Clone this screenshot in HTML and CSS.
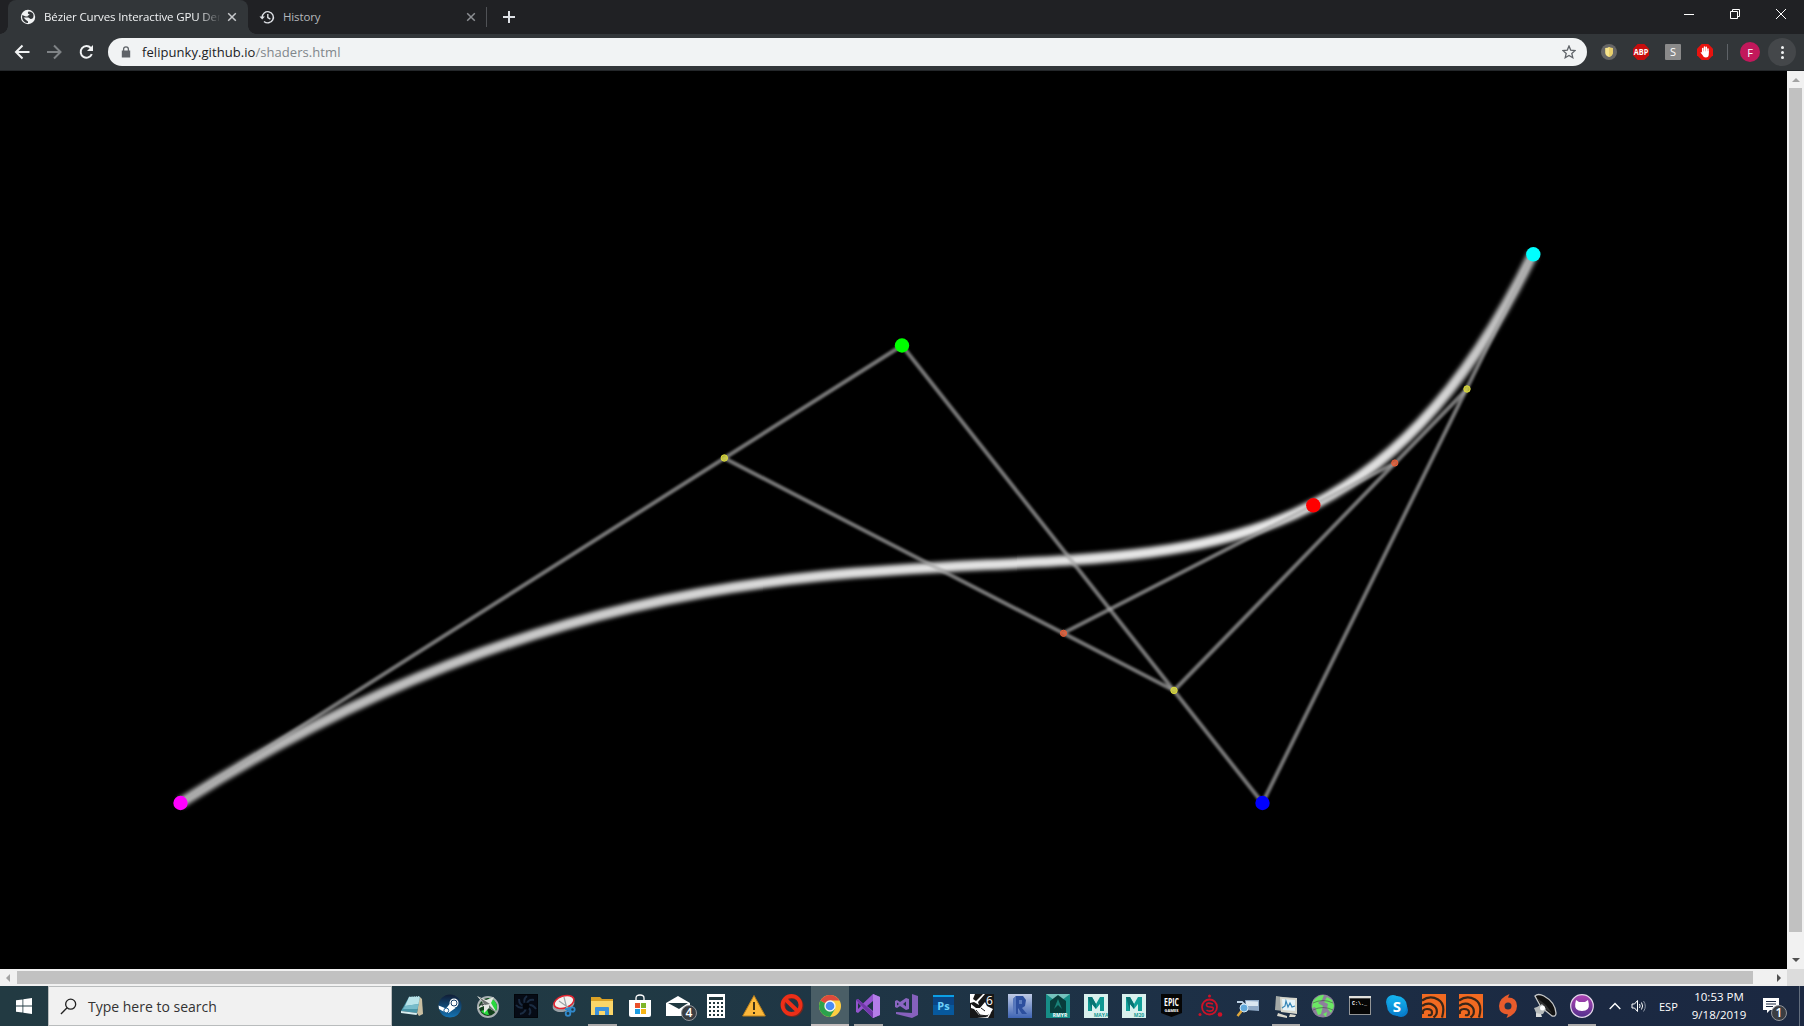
FILE: index.html
```html
<!DOCTYPE html>
<html lang="en">
<head>
<meta charset="utf-8">
<title>Bézier Curves Interactive GPU Demo</title>
<link rel="stylesheet" href="styles.css">
</head>
<body>
<div class="screen">
  <header class="tabstrip">
    <div class="tab tab-active">
      <svg class="tab-icon" viewBox="0 0 16 16"><circle cx="8" cy="8" r="7.2" fill="#f1f3f4"/><path d="M8.500 2.500q-1 1-.5 2.200 1.500 0 1.500 1.300-2 .3-2 1.500-2 0-3-.5L2.300 6Q1.500 10 4 12.500q2 1.800 4 1.500v-1.500l-2-1.500-2.500-2.500h5l2 1.500q2 0 2.800-1.500 1-4-1.800-5.300Q10 2.200 8.500 2.500z" fill="#323639"/></svg>
      <span class="tab-title fade">Bézier Curves Interactive GPU Demo</span>
      <svg class="tab-close bright" viewBox="0 0 10 10"><path d="M1.200 1.200l7.600 7.600M8.800 1.200L1.200 8.800"/></svg>
    </div>
    <div class="tab">
      <svg class="tab-icon history" viewBox="0 0 16 16" fill="none" stroke="#dee1e6" stroke-width="1.4"><path d="M3.200 8.500a5.600 5.600 0 1 1 1.800 3.900M8.800 5v3.600l2.600 1.500"/><path d="M.5 7.600h5.400L3.200 10.500z" fill="#dee1e6" stroke="none"/></svg>
      <span class="tab-title">History</span>
      <svg class="tab-close" viewBox="0 0 10 10"><path d="M1.200 1.200l7.600 7.600M8.800 1.200L1.200 8.800"/></svg>
    </div>
    <div class="tab-divider"></div>
    <svg class="new-tab" viewBox="0 0 12 12"><path d="M6 0v12M0 6h12" stroke="#dee1e6" stroke-width="2"/></svg>
    <div class="window-controls">
      <svg viewBox="0 0 12 12"><path d="M1 6.500h10"/></svg>
      <svg viewBox="0 0 12 12"><path d="M1.500 3.500h7v7h-7zM3.500 3.500v-2h7v7h-2"/></svg>
      <svg viewBox="0 0 12 12"><path d="M1 1l10 10M11 1L1 11"/></svg>
    </div>
  </header>

  <nav class="toolbar">
    <svg class="nav-icon" viewBox="0 0 16 16" stroke="#f1f3f4"><path d="M15.500 8H2.500M8.500 1.500L2 8l6.500 6.500"/></svg>
    <svg class="nav-icon" viewBox="0 0 16 16" stroke="#7f8386"><path d="M1 8h13M8 1.500L14.500 8 8 14.500"/></svg>
    <svg class="nav-icon" viewBox="0 0 16 16" stroke="#f1f3f4"><path d="M13.800 10.200A5.800 5.800 0 1 1 12.800 4"/><path d="M15 1v6H9z" fill="#f1f3f4" stroke="none"/></svg>
    <div class="omnibox">
      <svg class="lock" viewBox="0 0 10 12"><path d="M.8 4.500h8.400v7H.8z" fill="#5f6368"/><path d="M2.600 5V3.200a2.400 2.400 0 0 1 4.800 0V5" fill="none" stroke="#5f6368" stroke-width="1.300"/></svg>
      <span class="url">felipunky.github.io<span class="path">/shaders.html</span></span>
      <svg class="star" viewBox="0 0 14 14"><path d="M7 1l1.700 4.100 4.400.4-3.300 2.900 1 4.300L7 10.400l-3.800 2.300 1-4.300L.9 5.500l4.400-.4z" fill="none" stroke="#5f6368" stroke-width="1.300"/></svg>
    </div>
    <div class="extensions">
      <svg viewBox="0 0 16 16"><circle cx="8" cy="8" r="8" fill="#666"/><path d="M4.200 4q2.800 0 3.800-1 1 1 3.800 1v4.500q0 3-3.800 4.500-3.800-1.500-3.800-4.500z" fill="#f7e48b"/><path d="M8 3q1 1 3.800 1v4.500q0 3-3.800 4.500z" fill="#ead06a"/></svg>
      <svg viewBox="0 0 16 16"><path d="M4.700 0h6.600L16 4.700v6.600L11.300 16H4.700L0 11.300V4.700z" fill="#c70d0d"/><text class="abp" x="8" y="11" text-anchor="middle" textLength="14.500" lengthAdjust="spacingAndGlyphs">ABP</text></svg>
      <svg viewBox="0 0 16 16"><rect width="16" height="16" rx="1" fill="#8a8a8a"/><text class="ext-s" x="8" y="12" text-anchor="middle">S</text></svg>
      <svg viewBox="0 0 16 16"><path d="M4.700 0h6.600L16 4.700v6.600L11.300 16H4.700L0 11.300V4.700z" fill="#e8130f"/><path d="M5.700 8V4.500M7.500 7.500V3M9.300 7.500V3.300M11 8V5" stroke="#fff" stroke-width="1.500" stroke-linecap="round"/><path d="M5 7.300h6.800V10q0 3.500-3 3.500-2.300 0-3.300-2.500L3.500 8.500l.8-.6L5.300 9z" fill="#fff"/></svg>
    </div>
    <div class="toolbar-divider"></div>
    <div class="avatar">F</div>
    <div class="menu"><i></i><i></i><i></i></div>
  </nav>

  <main class="page">
    <svg class="canvas" viewBox="0 71 1787 898">
      <defs>
        <filter id="soft" filterUnits="userSpaceOnUse" x="0" y="71" width="1787" height="898"><feGaussianBlur stdDeviation="1.9"/></filter>
        <filter id="thin" filterUnits="userSpaceOnUse" x="0" y="71" width="1787" height="898"><feGaussianBlur stdDeviation=".9"/></filter>
        <linearGradient id="tone" gradientUnits="userSpaceOnUse" x1="180" y1="0" x2="1533" y2="0"><stop offset="0" stop-color="#b0b0b0"/><stop offset=".5" stop-color="#e0e0e0"/><stop offset=".82" stop-color="#e8e8e8"/><stop offset=".92" stop-color="#dcdcdc"/><stop offset="1" stop-color="#b4b4b4"/></linearGradient>
      </defs>
      <path d="M180.500 803C902 345.500 1262.500 803 1533 254" fill="none" stroke="url(#tone)" stroke-width="10.500" filter="url(#soft)"/>
      <g class="hull" filter="url(#thin)">
        <path d="M180.500 803L902 345.500"/><path d="M902 345.500L1262.500 803"/><path d="M1262.500 803L1533 254"/>
        <path d="M724 458L1174 690.500"/><path d="M1174 690.500L1467 389"/><path d="M1063.500 633L1395 463"/>
      </g>
      <circle cx="180.500" cy="803" r="7.200" fill="#f0f"/><circle cx="902" cy="345.500" r="7.200" fill="#0f0"/>
      <circle cx="1262.500" cy="803" r="7.200" fill="#00f"/><circle cx="1533.300" cy="254.300" r="7.200" fill="#0ff"/>
      <circle cx="1313.300" cy="505.300" r="7.200" fill="red"/>
      <g fill="#dcdc3a" stroke="#dcdc3a" fill-opacity=".75"><circle cx="724.300" cy="458" r="3.200"/><circle cx="1174" cy="690.400" r="3.200"/><circle cx="1467" cy="389" r="3.200"/></g>
      <g fill="#ea5c34" stroke="#ea5c34" fill-opacity=".75"><circle cx="1063.500" cy="633.300" r="3.100"/><circle cx="1394.800" cy="463" r="3.100"/></g>
    </svg>
    <div class="vscroll"><b class="arrow up"></b><div class="vthumb"></div><b class="arrow down"></b></div>
    <div class="hscroll"><b class="arrow left"></b><div class="hthumb"></div><b class="arrow right"></b></div>
    <div class="corner"></div>
  </main>

  <footer class="taskbar">
    <div class="start"><svg viewBox="0 0 16 16"><path d="M0 2.300l6.500-.9v6.200H0zM7.300 1.200L16 0v7.600H7.300zM0 8.400h6.500v6.200L0 13.700zM7.300 8.400H16V16l-8.700-1.200z" fill="#fff"/></svg></div>
    <div class="search"><svg viewBox="0 0 18 18"><circle cx="11.300" cy="6.500" r="5.300" fill="none" stroke="#222" stroke-width="1.400"/><path d="M7.500 10.300L1 17" stroke="#222" stroke-width="1.400"/></svg><span>Type here to search</span></div>
    <div class="apps">
      <div class="app"><svg viewBox="0 0 24 24"><path d="M19 2l3 3 1 15-4 2-2-3z" fill="#c9bfa2"/><path d="M9 3l11-1-3 17-16-2z" fill="#4a97a9"/><path d="M9 3l11-1-1.500 8L5 12z" fill="#b9e4ea"/><path d="M5 12l13.500-2-1 5L3 15z" fill="#77bccb"/><path d="M1 17l16 2-.4 2L1 19z" fill="#d9eef0"/><path d="M9 2.500h11" stroke="#506e76" stroke-dasharray="1 1"/></svg></div>
      <div class="app"><svg viewBox="0 0 24 24"><defs><linearGradient id="st" x2="0" y2="1"><stop stop-color="#101d35"/><stop offset="1" stop-color="#1473b3"/></linearGradient></defs><circle cx="12" cy="12" r="11.500" fill="url(#st)"/><path d="M.6 11.500L8 14.500l4.500-5.500 5 5-7 5-6-2L1 15z" fill="#fff"/><circle cx="16" cy="9" r="4.500" fill="#fff"/><circle cx="16" cy="9" r="3" fill="#fff" stroke="#173d66"/><circle cx="8.300" cy="16.500" r="2.400" fill="#fff" stroke="#1b5d94"/></svg></div>
      <div class="app"><svg viewBox="0 0 24 24"><circle cx="12" cy="13" r="10" fill="#12401c" stroke="#a9b0b2" stroke-width="2"/><path d="M13 4a9 9 0 0 1 7 13l-5-5zM5 17l6-2 2 6q-5 0-8-4z" fill="#29d83e"/><path d="M1 2l9 4 8-3-3 6 6 10-8-5-5 5v-7l-7 3 6-6z" fill="#e6e8e4"/><path d="M3 3l11 7-5 1z" fill="#6e7271"/><path d="M13 11l8 8-8-5z" fill="#65706a"/><path d="M4 9l5 1-3 2z" fill="#454b48"/></svg></div>
      <div class="app"><svg viewBox="0 0 24 24"><rect width="24" height="24" fill="#060b15"/><g fill="none" stroke="#1b2c42" stroke-width="2"><path d="M12 12Q5 12 5 5M12 12Q8 6 13 2M12 12q1-7 8-6M12 12q6-3 10 3M12 12q7 4 3 9M12 12q0 7-6 8M12 12Q6 16 2 11"/></g><circle cx="12" cy="12" r="3.500" fill="#03060c"/><rect x=".5" y=".5" width="23" height="23" fill="none" stroke="#03060b"/></svg></div>
      <div class="app"><svg viewBox="0 0 24 24"><ellipse cx="11.500" cy="10.500" rx="11.300" ry="7" transform="rotate(-18 11.500 10.500)" fill="#9aa1a6"/><ellipse cx="12" cy="8" rx="10.300" ry="6" transform="rotate(-18 12 8)" fill="#f4f1ef" stroke="#df2531" stroke-width="1.600"/><path d="M7 7l10 7M12 3l3 12" stroke="#9ba3a8" stroke-width="1.200"/><g fill="none" stroke="#3189cb" stroke-width="1.800"><circle cx="20.500" cy="15.500" r="2.200"/><circle cx="16" cy="19.500" r="2.300"/><path d="M13 15l6 0M17 17v-4"/></g></svg></div>
      <div class="app running"><svg viewBox="0 0 24 24"><path d="M1 3h9l2 2h11v15H1z" fill="#dba226"/><path d="M1 7h22v14H1z" fill="#fbd669"/><path d="M5 21v-7q0-1 1-1h12q1 0 1 1v7h-4v-4H9v4z" fill="#3d91da"/></svg></div>
      <div class="app"><svg viewBox="0 0 24 24"><path d="M8 7V4q0-3 4-3t4 3v3" fill="none" stroke="#fff" stroke-width="1.300"/><path d="M1 6h22v15q0 2-2 2H3q-2 0-2-2z" fill="#fff"/><path fill="#e9502b" d="M7 9h5v5H7z"/><path fill="#7eb62a" d="M13 9h5v5h-5z"/><path fill="#1b9de3" d="M7 15h5v5H7z"/><path fill="#f8b514" d="M13 15h5v5h-5z"/></svg></div>
      <div class="app"><svg viewBox="0 0 24 24"><path d="M0 9l12-7 12 7v13H0z" fill="#fff"/><path d="M2 9h20l-9 6z" fill="#203840"/></svg><span class="badge">4</span></div>
      <div class="app"><svg viewBox="0 0 24 24"><path d="M3 0h18v24H3z" fill="#fff"/><path d="M5 3h14v3H5z" fill="#23383e"/><path d="M5 9h14M5 13h14M5 17h14M5 21h14" stroke="#23383e" stroke-width="2" stroke-dasharray="2 2"/></svg></div>
      <div class="app"><svg viewBox="0 0 24 24"><path d="M12 1.500L23.300 22H.7z" fill="#fcb83b" stroke="#bd821c" stroke-linejoin="round"/><path d="M12 8v8M12 18v2" stroke="#201c12" stroke-width="1.700"/></svg></div>
      <div class="app"><svg viewBox="0 0 24 24"><circle cx="12.500" cy="12" r="9" fill="none" stroke="#78271e" stroke-width="4"/><circle cx="11.500" cy="11" r="9" fill="none" stroke="#ed2f18" stroke-width="3.800"/><path d="M5 5l13 12.500" stroke="#ed2f18" stroke-width="4"/></svg></div>
      <div class="app current"><svg viewBox="0 0 24 24"><circle cx="12" cy="12" r="11" fill="#ffce42"/><path d="M12 12L2.500 6.500A11 11 0 0 0 12 23l5-8z" fill="#2ba24c"/><path d="M12 12L2.500 6.500A11 11 0 0 1 21.500 6.500H12z" fill="#de4a3c"/><circle cx="12" cy="12" r="5.700" fill="#f5f5f5"/><circle cx="12" cy="12" r="4.300" fill="#4b8bf5"/></svg></div>
      <div class="app running"><svg viewBox="0 0 24 24"><path d="M17 0l7 3v18l-7 3-10-9.500L2 19l-2-1V6l2-1 5 4.500zM17 7l-6 5 6 5zM2 9v6l3-3z" fill="#9455ce" fill-rule="evenodd"/><path d="M17 0l7 3v18l-7 3z" fill="#b47de8"/><path d="M2 5L0 6l17 18v-6z" fill="#7137a9"/></svg></div>
      <div class="app"><svg viewBox="0 0 24 24"><path d="M18 0l6 2v19l-6 3-16-4v-2l16 1z" fill="#8661bd"/><path d="M12 4l3 1v10l-3 1-6-4-3 2-2-1V7l2-1 3 2zM12 7.500L9 10l3 2.500zM3 8.500v3L5 10z" fill="#8b66c2" fill-rule="evenodd"/></svg></div>
      <div class="app"><svg viewBox="0 0 24 24"><rect x="1" y="2" width="21" height="19" fill="#07599e"/><path d="M1 1h21v2H1z" fill="#0c9fe5"/><path d="M1 3h21v8H1z" fill="#0a4585"/><text class="ps" x="11.500" y="15.500" text-anchor="middle">Ps</text></svg></div>
      <div class="app"><svg viewBox="0 0 24 24"><path fill="#171717" d="M0 0h24v24H0z"/><path d="M0 0h5L3 5l3 2L13 0h2L8 8l1 3-5-3-4 1zM1 10l5 4 4 0 5-6 2 4 6 3-3 5-5 2-6-1-5-6-3-1zM7 23l9 0 5-4-3 5z" fill="#fff"/><path d="M11 14l4 3M6 16l4 5 8 1" stroke="#171717" fill="none"/><text class="six" x="16" y="10.500">6</text></svg></div>
      <div class="app"><svg viewBox="0 0 24 24"><defs><linearGradient id="rv" x2="0" y2="1"><stop stop-color="#bfcbe5"/><stop offset="1" stop-color="#3e64b4"/></linearGradient></defs><path fill="url(#rv)" d="M0 0h24v24H0z"/><path d="M5 5l3-3h7l3 4-1 6-3 2 5 6h-5l-4-6v6H6z" fill="#2c4f9e"/><path d="M11 6h3v4h-3z" fill="#5b7cbd"/><path d="M5 5l3-3v18H6z" fill="#5678bd"/></svg></div>
      <div class="app"><svg viewBox="0 0 24 24"><path fill="#168d87" d="M0 0h24v24H0z"/><path d="M0 0h24L12 9z" fill="#75c2bd"/><path d="M12 1l8 6v12H4V7z" fill="#083c3b"/><path d="M12 5l4 10-4-4-4 4z" fill="#198077"/><text class="app-label white" x="14" y="23" text-anchor="middle">RMYR</text></svg></div>
      <div class="app"><svg viewBox="0 0 24 24"><path fill="#d9f1ee" d="M0 0h24v24H0z"/><path d="M4 17V3h4l4 7 4-7h4v14h-4v-7l-4 5-4-5v7z" fill="#0e9892"/><path d="M4 3h4l4 7v5L8 10v7z" fill="#087574"/><text class="app-label" x="17" y="23" text-anchor="middle">MAYA</text></svg></div>
      <div class="app"><svg viewBox="0 0 24 24"><path fill="#d9f1ee" d="M0 0h24v24H0z"/><path d="M4 17V3h4l4 7 4-7h4v14h-4v-7l-4 5-4-5v7z" fill="#12a099"/><path d="M4 3h4l4 7v5L8 10v7z" fill="#087574"/><text class="app-label" x="17" y="23" text-anchor="middle">M20</text></svg></div>
      <div class="app"><svg viewBox="0 0 24 24"><path d="M1 0h21v19l-10.500 4L1 19z" fill="#050505"/><text class="epic" x="11.500" y="12" text-anchor="middle" textLength="15" lengthAdjust="spacingAndGlyphs">EPIC</text><text class="games" x="11.500" y="17.500" text-anchor="middle">GAMES</text></svg></div>
      <div class="app"><svg viewBox="0 0 24 24"><circle cx="11.500" cy="13" r="7.500" fill="none" stroke="#cf1227" stroke-width="1.800"/><path d="M15 10q-6-2-6.500.5t4 2.500 2 3.500q-3.500 1.500-6-.5" fill="none" stroke="#cf1227" stroke-width="1.600"/><g fill="#cf1227"><circle cx="11.500" cy="2" r="1.500"/><circle cx="2" cy="20.500" r="1.500"/><circle cx="22" cy="20.500" r="2.300"/></g></svg></div>
      <div class="app"><svg viewBox="0 0 24 24"><path d="M9 6h14v11l-13-1z" fill="#8fa9c6"/><path d="M10 7l12 .5V12l-12 0z" fill="#dbe7f1"/><path d="M1 8h5l3 3" stroke="#bfd2e4" stroke-width="2"/><circle cx="8" cy="14" r="4" fill="#61a9dc" stroke="#d6e9f5"/><path d="M5.500 17L1.500 22" stroke="#e0a83b" stroke-width="2.500"/></svg></div>
      <div class="app narrow running"><svg viewBox="0 0 24 24"><path d="M2 2l14 2v14L1 16z" fill="#a4a9a6"/><path d="M4 19l9 3v2l-10-2zM16 20l6 1-1 2h-6z" fill="#dad7cc"/><path d="M6 3l17 1v16L7 18z" fill="#d7d7cd"/><path d="M8 5l13 1v11L9 16z" fill="#e6f3f8"/><path d="M8 14l3-2 1-5 2 6 2-4 2 4 3-1" fill="none" stroke="#3585b6" stroke-width="1.200"/></svg></div>
      <div class="app narrow"><svg viewBox="0 0 24 24"><circle cx="12" cy="12" r="11.500" fill="#8e7e9c"/><path d="M2 7q6-7 11-6l-2 5-4 3 5 3-2 8-3 1-3-8-3 1zM16 3l5 3 2 6-3 7-4-5 1-4-4-2zM12 20l4-2-1 5z" fill="#6be764"/><path d="M2 9q10-5 20 0M2 16q10-5 20 0" stroke="#48484e" fill="none" stroke-width=".6"/></svg></div>
      <div class="app narrow"><svg viewBox="0 0 24 24"><path fill="#939596" d="M1 2h22v19H1z"/><path fill="#e0e0dc" d="M1 2h22v2H1z"/><path fill="#050505" d="M2 4.500h20V20H2z"/><text class="cmd" x="4" y="10.500">C:\._</text></svg></div>
      <div class="app narrow"><svg viewBox="0 0 24 24"><defs><linearGradient id="sk" x2="0" y2="1"><stop stop-color="#15b5f0"/><stop offset="1" stop-color="#087dcc"/></linearGradient></defs><circle cx="8" cy="8" r="7" fill="url(#sk)"/><circle cx="16" cy="16" r="7" fill="#087dcc"/><circle cx="12" cy="12" r="10" fill="url(#sk)"/><text class="skype" x="12" y="17.500" text-anchor="middle">S</text></svg></div>
      <div class="app narrow"><svg viewBox="0 0 24 24"><path fill="#f26a21" d="M0 0h24v24H0z"/><path d="M0 6.500Q8 1 16 5.500t4 18M0 12q6-4 11-1t3.500 9q-1 2-3 3.500M1 20q-1-5 4-5t5 3.500-4 2.500" fill="none" stroke="#382619" stroke-width="2.200"/></svg></div>
      <div class="app narrow"><svg viewBox="0 0 24 24"><path fill="#f26a21" d="M0 0h24v24H0z"/><path d="M0 6.500Q8 1 16 5.500t4 18M0 12q6-4 11-1t3.500 9q-1 2-3 3.500M1 20q-1-5 4-5t5 3.500-4 2.500" fill="none" stroke="#382619" stroke-width="2.200"/></svg></div>
      <div class="app narrow"><svg viewBox="0 0 24 24"><path d="M13.500 0L12 3.500q9 0 9 8.500 0 8-10.500 12l1.500-3.500q-9-.5-9-8.500Q3 4 13.500 0z" fill="#e85c2c"/><circle cx="12" cy="12" r="3.500" fill="#21324a"/></svg></div>
      <div class="app narrow"><svg viewBox="0 0 24 24"><path d="M2 2q3-3 9 0 11 6 12 17 0 4-4 3L8 13z" fill="#111" stroke="#c6c8c9" stroke-width="1.300"/><path d="M4 4l9 7 6 8L9 13z" fill="#333"/><path d="M1 14l3-1 5-3 4 5-3 5-6 1z" fill="#b6baba"/><path d="M3 19l5 1 1 3-6 0z" fill="#dadddd"/><circle cx="9.500" cy="14" r="2.500" fill="#fff"/></svg></div>
      <div class="app narrow running"><svg viewBox="0 0 24 24"><defs><linearGradient id="gh" x2="0" y2="1"><stop stop-color="#b044b4"/><stop offset="1" stop-color="#53308c"/></linearGradient></defs><circle cx="12" cy="12" r="11.300" fill="url(#gh)" stroke="#e4d8ea" stroke-width="1.200"/><path d="M6 6l3 2h6l3-2 .8 4q1 7-6.800 7t-6.800-7z" fill="#fff"/></svg></div>
    </div>
    <div class="tray">
      <svg class="chevron" viewBox="0 0 12 8"><path d="M.7 7L6 1.500 11.300 7" fill="none" stroke="#fff" stroke-width="1.400"/></svg>
      <svg class="volume" viewBox="0 0 17 14"><path d="M1 5h2.500L6.500 1.500v11L3.500 9H1z" fill="none" stroke="#fff"/><path d="M8.500 5q1.200 2 0 4M10.500 3.500q2.200 3.500 0 7" fill="none" stroke="#fff"/><path d="M12.500 2q3.600 5 0 10.500" fill="none" stroke="#8a93a2"/></svg>
      <span class="lang">ESP</span>
      <div class="clock"><span>10:53 PM</span><span>9/18/2019</span></div>
      <div class="action"><svg viewBox="0 0 16 16"><path d="M0 0h16v12h-9l-3 3v-3H0z" fill="#fff"/><path d="M3 3.500h10M3 6h10M3 8.500h7" stroke="#1c2a42"/></svg><span class="badge">1</span></div>
      <div class="peek"></div>
    </div>
  </footer>
</div>
</body>
</html>
```
FILE: styles.css
```css
* { box-sizing: border-box; }
body { margin: 0; overflow: hidden; font-family: "Open Sans", "Noto Sans", sans-serif; }
svg { display: block; flex: none; }
.screen { width: 1804px; height: 1026px; display: flex; flex-direction: column; background: #000; }

.tabstrip { height: 34px; flex: none; display: flex; align-items: center; background: #202124; padding-left: 8px; }
.tab { width: 240px; height: 34px; padding: 0 9px 0 12px; display: flex; align-items: center; color: #b5b8bc; }
.tab-active { position: relative; background: #323639; border-radius: 8px 8px 0 0; color: #f1f3f4; }
.tab-active::before, .tab-active::after { content: ""; position: absolute; bottom: 0; width: 8px; height: 8px; }
.tab-active::before { left: -8px; background: radial-gradient(circle at 0 0, transparent 7.5px, #323639 8px); }
.tab-active::after { right: -8px; background: radial-gradient(circle at 100% 0, transparent 7.5px, #323639 8px); }
.tab-icon { width: 16px; height: 16px; margin-right: 8px; }
.history { margin-left: -1px; }
.tab-title { flex: 1; overflow: hidden; white-space: nowrap; font-size: 11.500px; letter-spacing: -.13px; padding-bottom: 2px; }
.fade { -webkit-mask-image: linear-gradient(90deg, #000 155px, transparent 177px); mask-image: linear-gradient(90deg, #000 155px, transparent 177px); }
.tab-close { width: 10px; height: 10px; margin: 0 3px 0 6px; fill: none; stroke: #8c8f93; stroke-width: 1.500; }
.tab-close.bright { stroke: #c8cacd; margin: 0 2px 0 7px; }
.tab-divider { width: 1px; height: 20px; margin-left: -2px; background: #505256; }
.new-tab { width: 12px; height: 12px; margin-left: 16px; }
.window-controls { margin: 0 17px 6px auto; display: flex; gap: 34px; }
.window-controls svg { width: 12px; height: 12px; fill: none; stroke: #fff; }

.toolbar { height: 37px; flex: none; display: flex; align-items: center; background: #323639; border-bottom: 1px solid #24272a; padding: 0 8px 0 14px; }
.nav-icon { width: 16px; height: 16px; margin-right: 16px; fill: none; stroke-width: 2; }
.omnibox { width: 1479px; height: 28px; margin-left: -2px; flex: none; border-radius: 14px; background: #f1f3f4; display: flex; align-items: center; padding: 0 11px 0 13px; }
.lock { width: 10px; height: 12px; }
.url { flex: 1; margin-left: 11px; font-size: 13px; letter-spacing: .06px; color: #202124; white-space: nowrap; }
.path { color: #80868b; }
.star { width: 14px; height: 14px; }
.extensions { display: flex; gap: 16px; margin-left: 14px; }
.extensions svg { width: 16px; height: 16px; }
.abp { font: 700 8px "Open Sans", sans-serif; fill: #fff; }
.ext-s { font: 11px "Open Sans", sans-serif; fill: #fff; }
.toolbar-divider { width: 1px; height: 16px; margin-left: 14px; background: #5f6368; }
.avatar { width: 20px; height: 20px; margin-left: 12px; border-radius: 50%; background: #c2185b; color: #fff; font-size: 11px; display: flex; align-items: center; justify-content: center; }
.menu { width: 28px; height: 28px; margin-left: 8px; border-radius: 50%; background: #44474a; display: flex; flex-direction: column; align-items: center; justify-content: center; gap: 2px; }
.menu i { width: 3px; height: 3px; border-radius: 50%; background: #f1f3f4; }

.page { height: 915px; flex: none; display: grid; grid-template: 898px 17px / 1787px 17px; }
.canvas { width: 1787px; height: 898px; background: #000; }
.hull { fill: none; stroke: #a8a8a8; stroke-width: 4; stroke-opacity: .7; }
.vscroll, .hscroll { background: #f1f1f1; display: flex; align-items: center; }
.vscroll { flex-direction: column; padding: 7px 0; }
.vthumb { width: 13px; height: 844px; margin-top: 6px; background: #c1c1c1; }
.hthumb { width: 1736px; height: 13px; margin-left: 7px; background: #c1c1c1; }
.hscroll { padding: 0 6px; }
.arrow { width: 0; height: 0; border: 4px solid transparent; }
.up { border-top: 0; border-bottom-color: #a3a3a3; }
.down { border-bottom: 0; border-top-color: #505050; margin-top: auto; }
.left { border-left: 0; border-right-color: #a3a3a3; }
.right { border-right: 0; border-left-color: #505050; margin-left: auto; }
.corner { background: #dcdcdc; }

.taskbar { height: 40px; flex: none; display: flex; background: linear-gradient(90deg, #223a42 0, #203944 35%, #1d3046 65%, #1b2942 88%, #1b2841 100%); color: #fff; }
.start { width: 48px; display: flex; align-items: center; justify-content: center; }
.start svg { width: 16px; height: 16px; }
.search { width: 344px; border: 1px solid #b9bcbd; background: #f1f1f1; color: #333; display: flex; align-items: center; padding-left: 11px; }
.search svg { width: 17px; height: 17px; }
.search span { margin-left: 11px; font-size: 14px; }
.apps { display: flex; margin-left: 1px; }
.app { position: relative; width: 38px; height: 40px; display: flex; align-items: center; justify-content: center; }
.app.narrow { width: 37px; }
.app > svg { width: 24px; height: 24px; overflow: visible; }
.current { background: #4a5e66; }
.running::after, .current::after { content: ""; position: absolute; left: 5px; right: 4px; bottom: 0; height: 2px; background: #aaa9a9; }
.current::after { left: 0; right: 0; background: #c4bdbd; }
.badge { position: absolute; left: 22px; top: 19px; width: 16px; height: 16px; border-radius: 50%; border: 1px solid #90949a; background: #3a3d42; color: #fff; font-size: 12px; font-weight: 600; line-height: 14px; text-align: center; }
.ps { font: 700 11px "Open Sans", sans-serif; fill: #6ed1fb; }
.six { font: 12px "Open Sans", sans-serif; fill: #fff; }
.app-label { font: 700 5px "Open Sans", sans-serif; fill: #159993; }
.white { fill: #fff; }
.epic { font: 700 11px "Open Sans", sans-serif; fill: #fff; }
.games { font: 700 4px "Open Sans", sans-serif; fill: #fff; }
.cmd { font: 700 5px "Liberation Mono", monospace; fill: #fff; }
.skype { font: 700 15px "Open Sans", sans-serif; fill: #fff; }
.tray { flex: 1; display: flex; align-items: center; font-size: 12px; white-space: nowrap; }
.chevron { width: 12px; height: 8px; margin-left: 9px; }
.volume { width: 17px; height: 14px; margin-left: 10px; }
.lang { width: 20px; margin-left: 11px; font-size: 11px; }
.clock { width: 54px; margin-left: 13px; display: flex; flex-direction: column; align-items: center; font-size: 11.500px; line-height: 18px; }
.action { position: relative; margin-left: 17px; }
.action svg { width: 16px; height: 16px; }
.action .badge { left: 8px; top: 7px; }
.peek { width: 1px; height: 40px; margin: 0 4px 0 auto; background: #626d7d; }
```
